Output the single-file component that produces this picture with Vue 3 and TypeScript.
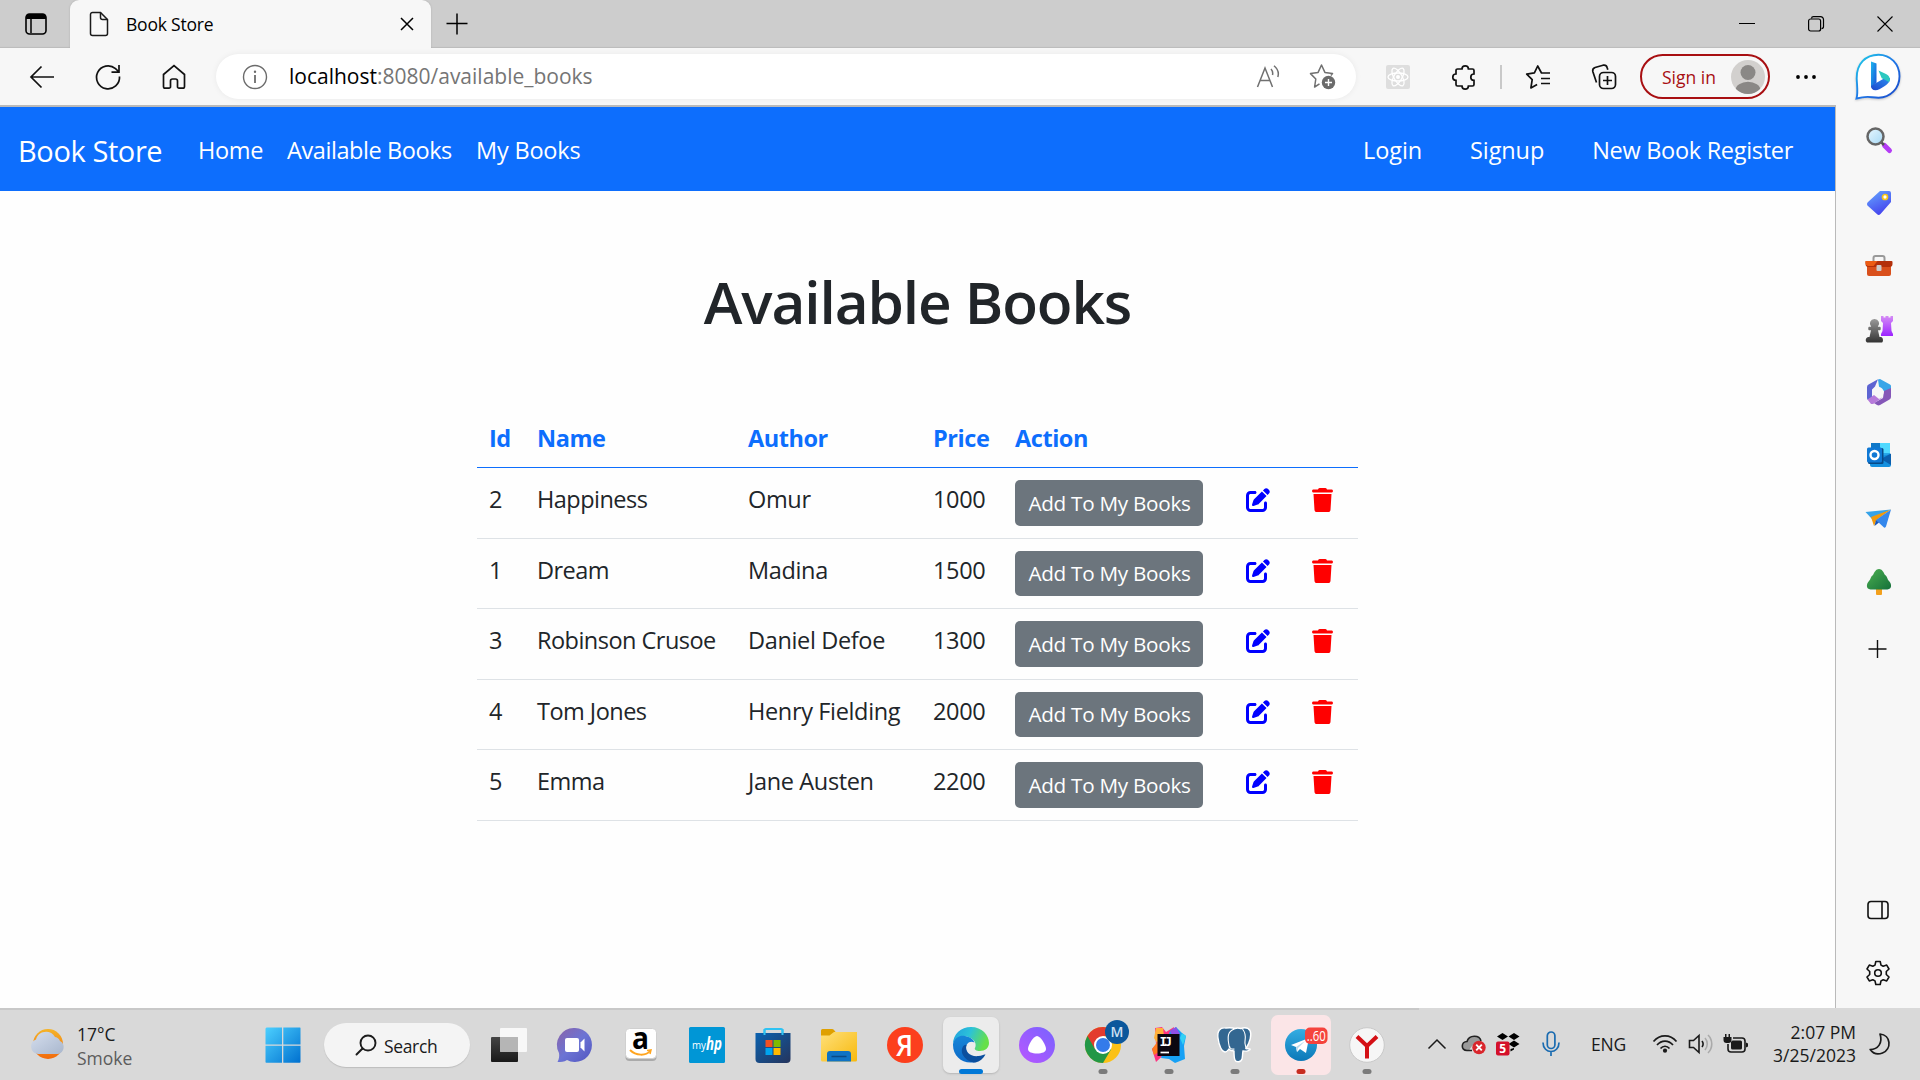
<script setup lang="ts">
interface Book {
  id: number
  name: string
  author: string
  price: number
}

const books: Book[] = [
  { id: 2, name: 'Happiness', author: 'Omur', price: 1000 },
  { id: 1, name: 'Dream', author: 'Madina', price: 1500 },
  { id: 3, name: 'Robinson Crusoe', author: 'Daniel Defoe', price: 1300 },
  { id: 4, name: 'Tom Jones', author: 'Henry Fielding', price: 2000 },
  { id: 5, name: 'Emma', author: 'Jane Austen', price: 2200 },
]
</script>

<template>
  <div class="screen">
    <header class="tabstrip">
      <div class="tab-actions">
        <svg width="22" height="22" viewBox="0 0 22 22"><rect x="1" y="1" width="20" height="20" rx="3.5" fill="none" stroke="#000" stroke-width="1.6" /><path d="M1 6V4a3 3 0 0 1 3-3h14a3 3 0 0 1 3 3v2z" fill="#000" /><path d="M6 6v14" stroke="#000" stroke-width="1.5" /></svg>
      </div>
      <div class="tab">
        <svg class="file" width="20" height="26" viewBox="0 0 20 26" fill="none" stroke="#1a1a1a" stroke-width="1.5"><path d="M3.500 1.500h8l7 7v14a2 2 0 0 1-2 2h-13a2 2 0 0 1-2-2v-19a2 2 0 0 1 2-2z" /><path d="M11.500 1.500v5a2 2 0 0 0 2 2h5" /></svg>
        <span class="tab-title">Book Store</span>
        <svg width="14" height="14" viewBox="0 0 14 14" stroke="#000" stroke-width="1.5"><path d="M1 1l12 12M13 1L1 13" /></svg>
      </div>
      <svg class="newtab" width="22" height="22" viewBox="0 0 22 22" stroke="#000" stroke-width="1.5"><path d="M11 .5v21M.5 10.500h21" /></svg>
      <div class="win">
        <span><svg width="16" height="16" viewBox="0 0 16 16" stroke="#000"><path d="M0 7.500h16" /></svg></span>
        <span><svg width="16" height="16" viewBox="0 0 16 16" fill="none" stroke="#000" stroke-width="1.2"><rect x=".6" y="3" width="12" height="12" rx="2" /><path d="M3.500 2.500a2 2 0 0 1 2-1.900h7a3 3 0 0 1 3 3v7a2 2 0 0 1-2 2" /></svg></span>
        <span><svg width="16" height="16" viewBox="0 0 16 16" stroke="#000" stroke-width="1.1"><path d="M.5.5l15 15M15.500.5l-15 15" /></svg></span>
      </div>
    </header>

    <div class="toolbar">
      <div class="tools">
        <span><svg width="26" height="24" viewBox="0 0 26 24" fill="none" stroke="#111" stroke-width="1.7"><path d="M25 12H2M12.500 1.500L2 12l10.500 10.500" /></svg></span>
        <span><svg width="26" height="26" viewBox="0 0 26 26" fill="none" stroke="#111" stroke-width="1.7"><path d="M24.500 12.500A11.500 11.500 0 1 1 20.500 4.600L23.500 7.500M24 1v7.200h-7.500" /></svg></span>
        <span><svg width="24" height="26" viewBox="0 0 24 26" fill="none" stroke="#111" stroke-width="1.7"><path d="M1.500 10.500L12 1.500l10.500 9v12a1.700 1.700 0 0 1-1.700 1.700H17a1.500 1.500 0 0 1-1.500-1.500V17a2 2 0 0 0-2-2h-3a2 2 0 0 0-2 2v5.700A1.500 1.500 0 0 1 7 24.200H3.200a1.700 1.700 0 0 1-1.700-1.700z" /></svg></span>
      </div>
      <div class="address">
        <svg width="26" height="26" viewBox="0 0 26 26" fill="none" stroke="#6b6b6b" stroke-width="1.4"><circle cx="13" cy="13" r="11.500" /><path d="M13 11v8" stroke-width="1.800" /><circle cx="13" cy="7.800" r="1.200" fill="#6b6b6b" stroke="none" /></svg>
        <span class="url"><b>localhost</b>:8080/available_books</span>
        <svg class="read" width="24" height="24" viewBox="0 0 24 24" fill="none" stroke="#707070" stroke-width="1.5"><path d="M1.500 22L9 3l7.500 19M4.300 15.500h9.500M15 4c1.500 1.700 2 4 1.500 6M18 .8c3.800 3.200 5 7.500 3.800 11.200" /></svg>
        <svg class="star" width="28" height="28" viewBox="0 0 28 28"><path d="M10.500 20.800L5.600 24l1.200-8L1.500 10.600l7.600-1.200L12.500 2l3.400 7.400 7.600 1.200-1.600 1.800" fill="none" stroke="#707070" stroke-width="1.500" stroke-linejoin="round" /><circle cx="19.500" cy="19.500" r="6.700" fill="#6b6b6b" /><path d="M19.500 16v7M16 19.500h7" stroke="#fff" stroke-width="1.400" /></svg>
      </div>
      <div class="tools ext">
        <span><svg width="24" height="24" viewBox="0 0 24 24"><rect width="24" height="24" rx="2" fill="#dedede" /><g fill="none" stroke="#fff" stroke-width="1.300"><ellipse cx="12" cy="12" rx="10" ry="4" /><ellipse cx="12" cy="12" rx="10" ry="4" transform="rotate(60 12 12)" /><ellipse cx="12" cy="12" rx="10" ry="4" transform="rotate(120 12 12)" /></g><circle cx="12" cy="12" r="2" fill="#fff" /></svg></span>
        <span><svg width="24" height="26" viewBox="0 0 24 26" fill="none" stroke="#111" stroke-width="1.7"><path d="M4 9V6.500A1.500 1.500 0 0 1 5.500 5H10a3.200 3.200 0 0 1 6.400 0h4.100A1.500 1.500 0 0 1 22 6.500V10a3.200 3.200 0 0 0 0 6.400v4.100a1.500 1.500 0 0 1-1.500 1.500h-4.100a3.200 3.200 0 0 1-6.400 0H5.500A1.500 1.500 0 0 1 4 20.500v-4.100A3.200 3.200 0 0 1 4 10z" /></svg></span>
        <i class="sep"></i>
        <span><svg width="26" height="26" viewBox="0 0 26 26" fill="none" stroke="#111" stroke-width="1.7" stroke-linejoin="round"><path d="M25 9h-8.500L12.700 2l-3.300 6.900-7.700 1.200 5.500 5.500L5.900 24l6.200-3.600M16 14.500h9M16 19.500h9" /></svg></span>
        <span><svg width="26" height="26" viewBox="0 0 26 26" fill="none" stroke="#111" stroke-width="1.7"><rect x="8.500" y="8.500" width="16" height="16" rx="4" /><path d="M16.500 12v9M12 16.500h9M5.500 18.500L1.800 7.500a3.500 3.500 0 0 1 2.300-4L12 1.200a3.500 3.500 0 0 1 4.200 2.500l.6 2" /></svg></span>
      </div>
      <div class="signin">
        <span>Sign in</span>
        <svg width="34" height="34" viewBox="0 0 34 34"><clipPath id="av"><circle cx="17" cy="17" r="17" /></clipPath><g clip-path="url(#av)"><rect width="34" height="34" fill="#d2d0ce" /><circle cx="17" cy="12.500" r="7.500" fill="#8a8886" /><ellipse cx="17" cy="30.500" rx="12.500" ry="8.700" fill="#8a8886" /></g></svg>
      </div>
      <svg class="dots" width="22" height="6" viewBox="0 0 22 6"><circle cx="3" cy="3" r="1.900" /><circle cx="11" cy="3" r="1.900" /><circle cx="19" cy="3" r="1.900" /></svg>
      <svg class="bing" width="46" height="47" viewBox="0 0 46 47">
        <defs><linearGradient id="bg1" x1="0" y1="0" x2="1" y2="1"><stop offset="0" stop-color="#1fd0e8" /><stop offset=".5" stop-color="#1f78e8" /><stop offset="1" stop-color="#1b48c8" /></linearGradient><linearGradient id="bg2" x1="0" y1="0" x2="1" y2="1"><stop offset="0" stop-color="#1cb8ee" /><stop offset="1" stop-color="#1a50d8" /></linearGradient><linearGradient id="bg3" x1="0" y1="1" x2="1" y2="0"><stop offset="0" stop-color="#1b48cc" /><stop offset="1" stop-color="#2f8cf0" /></linearGradient></defs>
        <path d="M1.500 45.500c1.700-6 .5-12 .2-20C1.300 11 10.500 1.700 23.500 1.700c12 0 21 9.500 21 21.500s-9 21.500-21 21.500c-8 0-10-2.500-22 .8z" fill="#fff" stroke="url(#bg1)" stroke-width="1.900" class="bubble" />
        <path d="M16 8.500l5.500 2v19.500L16 34.500z" fill="url(#bg2)" /><path d="M16 33l12.500-7.300 6.500-.7c.3 4-3 6.700-6 8.500-3.500 2.200-6 3.700-8.500 3.700C17.500 37.200 16 35.500 16 33z" fill="url(#bg3)" /><path d="M23.500 17.500l7.500 3.500c3.500 1.800 5 5.200 3 8.300-1.600-1.600-4.300-2.500-7.300-4z" fill="#2cc8c0" />
      </svg>
    </div>

    <div class="main">
      <div class="page">
        <nav class="navbar">
          <a class="brand">Book Store</a>
          <a class="n1">Home</a>
          <a class="n2">Available Books</a>
          <a class="n3">My Books</a>
          <a class="n4">Login</a>
          <a class="n5">Signup</a>
          <a class="n6">New Book Register</a>
        </nav>
        <h1>Available Books</h1>
        <div class="table">
          <div class="row head">
            <span>Id</span><span>Name</span><span>Author</span><span>Price</span><span>Action</span>
          </div>
          <div v-for="b in books" :key="b.id" class="row">
            <span>{{ b.id }}</span>
            <span class="name">{{ b.name }}</span>
            <span>{{ b.author }}</span>
            <span>{{ b.price }}</span>
            <button class="add">Add To My Books</button>
            <svg class="edit" width="24" height="24" viewBox="0 0 512 512" fill="#00f"><path d="M471.600 21.700c-21.900-21.900-57.300-21.900-79.200 0L362.300 51.700l97.900 97.900 30.100-30.100c21.900-21.900 21.900-57.300 0-79.200L471.600 21.700zm-299.200 220c-6.100 6.100-10.800 13.600-13.500 21.900l-29.600 88.800c-2.900 8.600-.6 18.100 5.800 24.600s15.900 8.700 24.600 5.800l88.800-29.600c8.200-2.700 15.700-7.400 21.900-13.500L437.700 172.300 339.700 74.300 172.400 241.700zM96 64C43 64 0 107 0 160V416c0 53 43 96 96 96H352c53 0 96-43 96-96V320c0-17.700-14.300-32-32-32s-32 14.300-32 32v96c0 17.700-14.300 32-32 32H96c-17.700 0-32-14.300-32-32V160c0-17.700 14.300-32 32-32h96c17.700 0 32-14.300 32-32s-14.300-32-32-32H96z" /></svg>
            <svg class="trash" width="21" height="24" viewBox="0 0 448 512" fill="#f00"><path d="M135.200 17.700L128 32H32C14.300 32 0 46.300 0 64S14.300 96 32 96H416c17.700 0 32-14.300 32-32s-14.300-32-32-32H320l-7.200-14.300C307.400 6.800 296.300 0 284.200 0H163.800c-12.100 0-23.200 6.800-28.600 17.700zM416 128H32L53.200 467c1.600 25.300 22.600 45 47.900 45H346.900c25.300 0 46.300-19.700 47.900-45L416 128z" /></svg>
          </div>
        </div>
      </div>

      <aside class="sidebar">
        <svg viewBox="0 0 28 28"><defs><linearGradient id="lens" x1="0" y1="0" x2="1" y2="1"><stop offset="0" stop-color="#e8f7ff" /><stop offset="1" stop-color="#a5d8f5" /></linearGradient></defs><path d="M19.500 19.500l5 5" stroke="#b43cf5" stroke-width="5" stroke-linecap="round" /><path d="M16 16l3 3" stroke="#555" stroke-width="2.500" /><circle cx="10.500" cy="10.500" r="8" fill="url(#lens)" stroke="#666" stroke-width="2.500" /></svg>
        <svg viewBox="0 0 28 28"><defs><linearGradient id="tg" x1="0" y1="0" x2=".5" y2="1"><stop offset="0" stop-color="#66aaff" /><stop offset="1" stop-color="#4646ee" /></linearGradient></defs><path d="M15 2h9a2 2 0 0 1 2 2v9L15.500 25a2.500 2.500 0 0 1-3.600 0L3 17a2.500 2.500 0 0 1 0-4z" fill="url(#tg)" /><circle cx="20" cy="8" r="2.500" fill="#fff" stroke="#f5c518" stroke-width="1.700" /></svg>
        <svg viewBox="0 0 28 28"><path d="M8.500 10V6a2 2 0 0 1 2-2h7a2 2 0 0 1 2 2v4" fill="none" stroke="#999" stroke-width="2" /><rect x="2" y="12" width="24" height="12" rx="2" fill="#d9501c" /><path d="M1.500 9h25a1 1 0 0 1 1 1v2a3 3 0 0 1-3 3h-21a3 3 0 0 1-3-3v-2a1 1 0 0 1 1-1z" fill="#b3300b" /><path d="M.5 9h12l-4 5H3a3 3 0 0 1-2.500-3z" fill="#ec5c14" /><rect x="11.500" y="13" width="5" height="6" rx="1" fill="#ccc" /></svg>
        <svg viewBox="0 0 28 28"><defs><linearGradient id="pw" x1="0" y1="0" x2="0" y2="1"><stop offset="0" stop-color="#999" /><stop offset="1" stop-color="#333" /></linearGradient><linearGradient id="rk" x1="0" y1="0" x2="0" y2="1"><stop offset="0" stop-color="#d58cf5" /><stop offset="1" stop-color="#9c24ff" /></linearGradient></defs><path d="M16 1h2.500v1.500h2V1h3v1.500h2V1H28v5l-2 2 .5 8 1.500 3v2H16v-2l1.500-3 .5-8-2-2z" fill="url(#rk)" /><path d="M9.500 4a4.500 4.500 0 0 1 3.300 7.700H15c1 0 1 3.500 0 3.500h-2l1.500 6.800h1.500c3 1 2 5.500 1 5.500H2C0 26 .500 23 3 22h1.500L6 15.200H4c-1 0-1-3.500 0-3.500h2.200A4.500 4.500 0 0 1 9.500 4z" fill="url(#pw)" /></svg>
        <svg viewBox="0 0 28 28"><path d="M13 1.500l2-.5 10 5.500a2 2 0 0 1 1 2V17l-8-4.500-4-4z" fill="#38a5e8" /><path d="M26 10v9a3 3 0 0 1-1.500 2.500L15 27a3 3 0 0 1-3 0L9 25l9-5 1-7z" fill="#8557b8" /><path d="M13 1.200L4 6.300A3 3 0 0 0 2 9v11a2.500 2.500 0 0 0 1 2l4-2.500v-8l3-3z" fill="#5d64d2" /><path d="M2.500 21.500L9 17l5 4 4-2-9 6.500a4 4 0 0 1-3 .5z" fill="#b67ada" /><circle cx="14" cy="14" r="4.700" fill="#f7f7f7" /></svg>
        <svg viewBox="0 0 28 28"><rect x="6" y="2" width="19" height="17" rx="1" fill="#28a8ea" /><path d="M15 2h10v10H15z" fill="#50d9ff" /><path d="M6 2h9v5H6z" fill="#0f78c8" /><path d="M5 17l21-4v11a2 2 0 0 1-2 2H7a2 2 0 0 1-2-2z" fill="#1490df" /><path d="M16 18l10-5.500V24z" fill="#0a5fae" /><rect x="3" y="7" width="15.500" height="16" rx="1.500" fill="#074a87" /><rect x="2" y="6.500" width="15" height="15" rx="1.500" fill="#0f78d4" /><circle cx="9.500" cy="14" r="4" fill="none" stroke="#fff" stroke-width="2.400" /></svg>
        <svg viewBox="0 0 28 28"><path d="M.5 7L26 4.500 7 14z" fill="#36a3e8" /><path d="M26 4.500L6 12l3 9 2.500-6z" fill="#f29a0c" /><path d="M26 4.500L11 15l8 7.500c1 .5 1.500 0 2-1z" fill="#3487ec" /><path d="M11 15l3 2.500-4.500 3.500z" fill="#1455bf" /></svg>
        <svg viewBox="0 0 28 28"><defs><linearGradient id="tr" x1="0" y1="0" x2="1" y2="1"><stop offset="0" stop-color="#4caf50" /><stop offset="1" stop-color="#14703a" /></linearGradient></defs><rect x="11" y="20" width="6" height="7" rx="1" fill="#f3a01c" /><path d="M14 1c3 0 4.500 3 6 6 2.500 1.500 2 4 4 6 3 3 3 8-1.500 8.500h-17C1 21 1 16 4 13c2-2 1.500-4.500 4-6 1.500-3 3-6 6-6z" fill="url(#tr)" /></svg>
        <svg class="plus" viewBox="0 0 28 28" stroke="#111" stroke-width="1.400"><path d="M12.500 5v18M3.500 14h18" /></svg>
        <i class="rule"></i>
        <svg class="panel" viewBox="0 0 28 28" fill="none" stroke="#111" stroke-width="1.600"><rect x="3" y="5.500" width="20" height="17" rx="3" /><path d="M17 5.500v17" /></svg>
        <svg class="gear" viewBox="0 0 28 28" fill="none" stroke="#111" stroke-width="1.600" stroke-linejoin="round"><circle cx="13" cy="14" r="3.300" /><path d="M10.800 2.500h4.400l.8 3.600 2.200 1.200 3.500-1.200 2.300 3.900-2.700 2.500v3l2.700 2.500-2.300 3.900-3.500-1.200-2.200 1.200-.8 3.600h-4.400L10 21.900l-2.200-1.200-3.500 1.200L2 18l2.700-2.500v-3L2 10l2.300-3.900 3.500 1.200L10 6.100z" /></svg>
      </aside>
    </div>

    <footer class="taskbar">
      <div class="weather">
        <svg width="36" height="32" viewBox="0 0 36 32"><defs><linearGradient id="sun" x1="0" y1="0" x2="0" y2="1"><stop offset="0" stop-color="#f4b429" /><stop offset="1" stop-color="#f26a0c" /></linearGradient><linearGradient id="cl" x1="0" y1="0" x2="1" y2="1"><stop offset="0" stop-color="#d5deee" /><stop offset="1" stop-color="#a9b7cd" /></linearGradient></defs><circle cx="18" cy="16" r="15" fill="url(#sun)" /><path d="M8 26a7.500 7.500 0 0 1-2-14.500c2-9 15-10.500 19-2.500 3 .5 4 2 5 4a7 7 0 0 1-2 13z" fill="url(#cl)" /></svg>
        <div><p class="temp">17°C</p><p class="smoke">Smoke</p></div>
      </div>
      <svg class="start" width="36" height="36" viewBox="0 0 36 36"><defs><linearGradient id="ws" x1="0" y1="0" x2="1" y2="1"><stop offset="0" stop-color="#4cd0ff" /><stop offset="1" stop-color="#0070cf" /></linearGradient></defs><path d="M1.500.5H17v17H.5v-16zM18.300.5H35a.8.8 0 0 1 .5.8v16.200H18.300zM.5 18.800H17v17H1.300a.8.800 0 0 1-.8-.8zM18.300 18.800h17.200V35a.8.800 0 0 1-.8.8H18.300z" fill="url(#ws)" /></svg>
      <div class="search">
        <svg width="22" height="22" viewBox="0 0 22 22" fill="none" stroke="#1c1c1c" stroke-width="1.900"><circle cx="13" cy="9" r="7.500" /><path d="M7.500 14.500L1.500 20.500" stroke-linecap="round" /></svg>
        <span>Search</span>
      </div>
      <div class="apps">
        <span class="app"><svg viewBox="0 0 36 36"><defs><linearGradient id="tv" x1="0" y1="0" x2="0" y2="1"><stop offset="0" stop-color="#444" /><stop offset="1" stop-color="#191919" /></linearGradient></defs><rect y="10" width="27" height="25" rx="1" fill="url(#tv)" /><rect x="9" y="1" width="27" height="24" rx="1" fill="#fff" opacity=".8" /><path d="M9 10h18v15H9z" fill="#aaa" opacity=".75" /></svg></span>
        <span class="app"><svg viewBox="0 0 36 36"><defs><linearGradient id="ch" x1="0" y1="0" x2="1" y2="1"><stop offset="0" stop-color="#8b63a8" /><stop offset=".5" stop-color="#6c74d4" /><stop offset="1" stop-color="#5155c0" /></linearGradient></defs><path d="M18 1a17 17 0 1 1-8 32c-3 2-6 2-9.500 2 1.700-3 2-6 1.500-9A17 17 0 0 1 18 1z" fill="url(#ch)" /><rect x="8" y="11" width="14" height="14" rx="2" fill="#fff" /><path d="M23.500 15.500l4-4v13l-4-4z" fill="#fff" /></svg></span>
        <span class="app"><svg viewBox="0 0 36 36"><rect x="2.500" y="3" width="31" height="31" rx="4" fill="#aaa" /><rect x="2.500" y="1.500" width="31" height="30" rx="4" fill="#fff" stroke="#d0d0d0" /><text x="17.500" y="22" text-anchor="middle" font-size="31" font-weight="700" textLength="17" lengthAdjust="spacingAndGlyphs">a</text><path d="M7 23c6 6 16 6 20 1" fill="none" stroke="#ffa51f" stroke-width="2" /><path d="M24 23.500l4-.5-1 4" fill="none" stroke="#ffa51f" stroke-width="1.500" /></svg></span>
        <span class="app"><svg viewBox="0 0 36 36"><rect width="36" height="36" rx="1.500" fill="#0096d6" /><text x="3" y="21.500" fill="#fff" font-size="11" textLength="14" lengthAdjust="spacingAndGlyphs">my</text><text x="17" y="22.500" fill="#fff" font-size="17" font-weight="700" font-style="italic" textLength="16" lengthAdjust="spacingAndGlyphs">hp</text></svg></span>
        <span class="app"><svg viewBox="0 0 36 36"><defs><linearGradient id="st" x1="0" y1="0" x2="1" y2="1"><stop offset="0" stop-color="#0b62b0" /><stop offset="1" stop-color="#25345c" /></linearGradient></defs><path d="M9.500 8V3.500a1.500 1.500 0 0 1 1.500-1.500h15a1.500 1.500 0 0 1 1.500 1.500V8" fill="none" stroke="#2fc3f3" stroke-width="2" /><path d="M.5 6h35v26a4 4 0 0 1-4 4h-27a4 4 0 0 1-4-4z" fill="url(#st)" /><path d="M9.500 2v6M27.500 2v6" stroke="#2fc3f3" stroke-width="2" /><path d="M10.500 13h7v7h-7z" fill="#f25022" /><path d="M18.500 13h7v7h-7z" fill="#7fba00" /><path d="M10.500 21h7v7h-7z" fill="#00a4ef" /><path d="M18.500 21h7v7h-7z" fill="#ffb900" /></svg></span>
        <span class="app"><svg viewBox="0 0 36 36"><defs><linearGradient id="fo" x1="0" y1="0" x2="1" y2="1"><stop offset="0" stop-color="#ffe07a" /><stop offset="1" stop-color="#f7b90d" /></linearGradient></defs><path d="M0 3.500A1.500 1.500 0 0 1 1.500 2H11a3 3 0 0 1 2 1l2 2.500-5 6H0z" fill="#dfa000" /><path d="M0 8.500h8.500L13 5h23v28a1.500 1.500 0 0 1-1.500 1.500h-33A1.500 1.500 0 0 1 0 33z" fill="url(#fo)" /><path d="M6 34.500V27a3 3 0 0 1 3-3h18a3 3 0 0 1 3 3v7.500z" fill="#0f73c4" /><path d="M10.500 29.500h15" stroke="#0a4a86" stroke-width="1.500" /></svg></span>
        <span class="app"><svg viewBox="0 0 36 36"><circle cx="18" cy="18" r="18" fill="#fc3f1d" /><text x="17.500" y="28.500" text-anchor="middle" font-size="29.500" fill="#fff" font-weight="600" textLength="17" lengthAdjust="spacingAndGlyphs">Я</text></svg></span>
        <span class="app on"><svg viewBox="0 0 36 36"><defs><linearGradient id="e1" x1="0" y1="0" x2="1" y2=".3"><stop offset="0" stop-color="#1f9fe0" /><stop offset=".5" stop-color="#2cc2d8" /><stop offset="1" stop-color="#66e04a" /></linearGradient><linearGradient id="e2" x1="0" y1="0" x2="0" y2="1"><stop offset="0" stop-color="#1686d8" /><stop offset="1" stop-color="#0d6ac8" /></linearGradient></defs><path d="M0 17C0 7 8 0 18 0c11 0 18 8 18 16 0 5-4 8-9 8-4 0-6-1.500-5-3 2-4-.500-9-6.500-11C9 8.500 2 11 0 17z" fill="url(#e1)" /><path d="M0 17C1.500 10.500 7 8 12 9c5 .8 8.500 3.500 9.500 6.500-5-2.500-9 1.500-8.500 6.500.5 6 6 10.500 10.500 12.700C11 38.500 0 30 0 18z" fill="url(#e2)" /><path d="M13.500 18c-2 7 4 12 12 11 3.500-.5 5.500-2 7-1.500-2 4-6 7-10 8-9 0-16-9-13-15 1-2 2.500-3 4-2.500z" fill="#0b4f9e" /></svg></span>
        <span class="app"><svg viewBox="0 0 36 36"><defs><linearGradient id="al" x1="0" y1="1" x2="1" y2="0"><stop offset="0" stop-color="#b956ff" /><stop offset="1" stop-color="#7763ff" /></linearGradient></defs><circle cx="18" cy="18" r="18" fill="url(#al)" /><path d="M18 9c3.500 0 9 9 9 13 0 3-4 4.500-9 4.500S9 25 9 22c0-4 5.500-13 9-13z" fill="#fff" /></svg></span>
        <span class="app run"><svg viewBox="0 0 36 36"><circle cx="18" cy="18" r="18" fill="#fbc116" /><path d="M18 18L2.400 9A18 18 0 0 1 33.600 9H18z" fill="#e33b2e" /><path d="M2.400 9A18 18 0 0 0 18 36l8-13.500-8-4.500z" fill="#229746" /><path d="M2.400 9L10 22l8-4V9z" fill="#e33b2e" /><circle cx="18" cy="18" r="9" fill="#fff" /><circle cx="18" cy="18" r="7" fill="#347bea" /><circle cx="32" cy="5" r="12" fill="#0b579c" /><text x="32" y="10" text-anchor="middle" font-size="14" font-weight="600" fill="#cbe0f3">M</text></svg></span>
        <span class="app run"><svg viewBox="0 0 36 36"><path d="M4 1l7-1 4 5 8-5-2 20L5 35 1 22l4-4z" fill="#ff3380" /><path d="M5 1l7 0 1 9-7 6-3-5z" fill="#ffb13b" /><path d="M1 22l6-8 4 9-8 5z" fill="#ff7a20" /><path d="M19 4l6-4 6 6 4 3-2 10 1 13-10 4-6-4-8-1z" fill="#17a1f5" /><path d="M19 4l6-4 4 7-8 2z" fill="#8f50e8" /><path d="M31 6l4 3-3 9-3-7z" fill="#34d0f4" /><rect x="6.500" y="7" width="22" height="22" fill="#0b0710" /><text x="8.500" y="18.500" class="mono" font-size="12.500" font-weight="700" fill="#fff" textLength="12.500">IJ</text><path d="M9.500 25.500h8.500" stroke="#fff" stroke-width="1.700" /></svg></span>
        <span class="app run"><svg viewBox="0 0 36 36"><path d="M9 1C3 0 0 4 1 11c1 8 4 14 7 14 2 0 3-2 4-3 2 3 4 1 5 2 0 4 0 7 1 9 1 2.500 6 2.500 7-1 .6-2 .4-5 1-8 4 .6 8-1 7-2-2-.6-3 0-4-.5 4-6 6-14 4-18-2-3-6-3-9-2-2-.6-4-1-6 0-3-1-6-1-9-.5z" fill="#336791" stroke="#fff" stroke-width="1.400" /><path d="M12.500 21c-1-5-2-9-1-13 .6-3 3-5 6-6M25.500 2c4 5 3 9 2.500 12-.6 3 .8 5 1 7M17.500 22c-3 .5-5-.5-5-3" fill="none" stroke="#fff" stroke-width="1.100" /></svg></span>
        <span class="app run alert"><svg viewBox="0 0 36 36"><defs><linearGradient id="te" x1="0" y1="0" x2="0" y2="1"><stop offset="0" stop-color="#35ade2" /><stop offset="1" stop-color="#0b78b8" /></linearGradient></defs><circle cx="18" cy="18" r="16" fill="url(#te)" /><path d="M8 18l18-7-3 15-6-4-3 3-1-5z" fill="#fff" /><path d="M13 20l9-6-7 7-1 4z" fill="#b5d8ec" /><rect x="22" y=".5" width="22.500" height="16.500" rx="5" fill="#f5433d" /><text x="33.300" y="14" text-anchor="middle" font-size="14" fill="#fff" textLength="19" lengthAdjust="spacingAndGlyphs">..60</text></svg></span>
        <span class="app run"><svg viewBox="0 0 36 36"><circle cx="18" cy="18" r="17.300" fill="#f6f6f6" stroke="#c9c9c9" /><path d="M8 9.500l10 9.500 10-9.500M18 18v13.500" fill="none" stroke="#d40f15" stroke-width="4" /></svg></span>
      </div>
      <div class="tray">
        <svg class="chev" width="18" height="10" viewBox="0 0 18 10" fill="none" stroke="#1a1a1a" stroke-width="1.500"><path d="M.5 9.500L9 1l8.500 8.500" /></svg>
        <svg class="cloud" width="26" height="22" viewBox="0 0 26 22"><path d="M6 17.500C-.5 17.500 0 8.500 6 8.500 8 1.500 18.500 1.500 20 8c-5 0-8 3-12 9.500z" fill="#9a9a9a" /><path d="M11 17.500H6C-.5 17.500 0 8.500 6 8.500 8 1.500 18.500 1.500 20 8" fill="none" stroke="#222" stroke-width="1.600" /><circle cx="18" cy="14.500" r="6.700" fill="#d9262c" /><path d="M15.200 11.700l5.600 5.600M20.800 11.700l-5.600 5.600" stroke="#fff" stroke-width="1.900" /></svg>
        <svg class="drop" width="26" height="24" viewBox="0 0 26 24"><path d="M1 4.500l5.500-3.500 5.500 3.500L6.500 8zM12.500 4.500L18 1l5.500 3.500L18 8zM12.500 12L18 8.500l5.500 3.500-5.500 3.500zM14.500 17l3.500-1v1.500l-3.500 2z" /><rect y="9.500" width="13.500" height="14" rx="2" fill="#d4102a" /><text x="6.700" y="21" text-anchor="middle" fill="#fff" font-size="12" font-weight="700">5</text></svg>
        <svg class="mic" width="18" height="26" viewBox="0 0 18 26" fill="none" stroke="#1a6bb0" stroke-width="1.700"><rect x="5.300" y="1" width="7.600" height="16.500" rx="3.800" /><path d="M1 11.500c0 12 16 12 16 0M9 20.500V25" /></svg>
        <span class="eng">ENG</span>
        <svg class="wifi" width="26" height="20" viewBox="0 0 26 20" fill="none" stroke="#1a1a1a" stroke-width="1.700"><path d="M1.500 7.500c6.500-7.500 16.500-7.500 23 0M5 11c4.500-5.300 11.500-5.300 16 0M8.500 14.500c2.500-3 6.500-3 9 0" /><circle cx="13" cy="16.700" r="2.100" fill="#1a1a1a" stroke="none" /></svg>
        <svg class="vol" width="26" height="22" viewBox="0 0 26 22" fill="none" stroke="#1a1a1a" stroke-width="1.600"><path d="M1.500 7.500h4L11 2.500v17L5.500 14.500h-4zM14 8c1.500 2 1.500 4 0 6" /><path d="M17 5c3 3.500 3 8.500 0 12M20 2c5 5 5 13 0 18" stroke="#aaa" /></svg>
        <svg class="batt" width="26" height="22" viewBox="0 0 26 22"><path d="M10 5h9a3 3 0 0 1 3 3v8a3 3 0 0 1-3 3H8a3 3 0 0 1-3-3v-5" fill="none" stroke="#1a1a1a" stroke-width="1.600" /><path d="M9.500 7.500h8A1.500 1.500 0 0 1 19 9v6a1.500 1.500 0 0 1-1.500 1.500h-8A1.500 1.500 0 0 1 8 15V9zM23 9.500l2 1v3l-2 1zM.5 4h8v3a3 3 0 0 1-3 3h-2a3 3 0 0 1-3-3zM2 1h1.500v3H2zM5.500 1H7v3H5.500z" fill="#1a1a1a" /></svg>
        <div class="clock"><p class="time">2:07 PM</p><p class="date">3/25/2023</p></div>
        <svg class="moon" width="22" height="22" viewBox="0 0 22 22" fill="none" stroke="#1a1a1a" stroke-width="1.700" stroke-linejoin="round"><path d="M11 1c11 1 12 15 2.500 19-5 2-9.500.5-12.300-3.500C9 16.500 14 10 11 1z" /></svg>
      </div>
    </footer>
  </div>
</template>

<style>
body { background: #fff; overflow: hidden; }
</style>

<style scoped>
.screen { width: 1920px; height: 1080px; overflow: hidden; display: flex; flex-direction: column; background: #f7f7f7; font-family: "Open Sans", "Noto Sans", sans-serif; color: #000; }
svg { display: block; flex: none; overflow: visible; }
p { margin: 0; }
span, a, p, h1 { white-space: nowrap; }

.tabstrip { height: 48px; flex: none; display: flex; background: #cdcdcd; box-shadow: inset 0 -2px 1px -1px #bcbcbc; }
.tab-actions { width: 70px; box-sizing: border-box; padding: 13px 0 0 25px; }
.tab { width: 361px; box-sizing: border-box; display: flex; align-items: center; background: #f7f7f7; border-radius: 9px 9px 0 0; padding: 0 17px 0 19px; box-shadow: 0 0 2px #aaa; clip-path: inset(0 -3px 0 -3px); }
.tab-title { flex: 1; margin-left: 17px; font-size: 17.500px; letter-spacing: -0.2px; line-height: 48px; }
.newtab { margin: 13px 0 0 15px; }
.win { margin-left: auto; display: flex; margin-right: 1px; }
.win span { width: 69px; height: 47px; display: flex; align-items: center; justify-content: center; }

.toolbar { height: 57px; flex: none; display: flex; align-items: center; padding-left: 9px; }
.tools { display: flex; align-items: center; }
.tools span { width: 66px; display: flex; justify-content: center; }
.address { width: 1140px; height: 45px; margin-left: 9px; box-sizing: border-box; display: flex; align-items: center; border-radius: 23px; background: #fff; padding: 0 19px 0 26px; box-shadow: 0 0 6px rgba(0, 0, 0, 0.06); }
.url { flex: 1; margin: -2px 0 0 21px; font-size: 21px; color: #757575; letter-spacing: 0; }
.url b { font-weight: 400; color: #000; }
.read { margin-right: 29px; }
.ext { margin-left: 9px; }
.sep { width: 2px; height: 24px; background: #c9c9c9; margin: 0 3px; }
.signin { width: 130px; height: 45px; margin-left: 3px; box-sizing: border-box; border: 2px solid #a80f12; border-radius: 23px; display: flex; align-items: center; justify-content: space-between; padding: 0 3px 0 20px; color: #a80f12; font-size: 17.500px; }
.dots { margin-left: 25px; }
.bing { margin-left: 38px; filter: drop-shadow(0 1px 1px rgba(0, 0, 0, 0.2)); }

.main { height: 903px; flex: none; display: flex; }
.page { width: 1835px; background: #fefefe; border-top: 2px solid #bababa; border-right: 1px solid #bababa; height: 901px; display: flex; flex-direction: column; }
.navbar { height: 84px; flex: none; background: #0d6efd; color: #fff; display: flex; align-items: center; padding: 2px 42px 0 18px; box-sizing: border-box; font-size: 23.500px; letter-spacing: -0.3px; }
.brand { font-size: 29px; width: 180px; letter-spacing: -0.4px; }
.n1 { width: 89px; }
.n2 { width: 189px; letter-spacing: -0.42px; }
.n3 { width: 150px; letter-spacing: -0.2px; }
.n4 { margin-left: auto; margin-right: 48px; letter-spacing: -0.1px; }
.n5 { margin-right: 48px; letter-spacing: -0.1px; }
h1 { margin: 68px 0 0; text-align: center; font-size: 58.500px; line-height: 84px; letter-spacing: -1.1px; font-weight: 600; color: #212529; }
.table { width: 881px; margin: 64px 0 0 477px; font-size: 23.500px; letter-spacing: -0.35px; color: #212529; }
.row { height: 70.500px; box-sizing: border-box; border-bottom: 1px solid #dee2e6; display: grid; grid-template-columns: 48px 211px 185px 82px 230px 67px 46px; padding-left: 12px; padding-top: 12px; align-items: start; }
.row span { line-height: 38px; }
.row .name { letter-spacing: -0.52px; }
.head { height: 61.400px; border-color: #0d6efd; color: #0d6efd; font-weight: 700; letter-spacing: -0.45px; }
.add { width: 188px; height: 45.500px; border: 0; border-radius: 5px; background: #6c757d; color: #fff; font-family: inherit; font-size: 20.700px; letter-spacing: -0.28px; line-height: 43px; padding: 0 0 0 1px; white-space: nowrap; }
.edit, .trash { margin-top: 8px; }
.edit { margin-left: 0.500px; }

.sidebar { width: 84px; display: flex; flex-direction: column; align-items: center; padding-top: 20.500px; box-sizing: border-box; }
.sidebar svg { width: 28px; height: 28px; margin-bottom: 35.200px; margin-left: 2px; }
.sidebar .plus { margin-top: 3.500px; margin-bottom: 210px; }
.rule { width: 42px; height: 1px; background: #b5b5b5; }
.sidebar .panel { margin-top: 23px; margin-bottom: 35px; }

.taskbar { height: 72px; flex: none; display: flex; align-items: center; background: linear-gradient(#c8c8c8, #c8c8c8) 0 0 / 1419px 2px no-repeat #d9d9d9; color: #1a1a1a; }
.weather { width: 236px; display: flex; align-items: center; padding-left: 30px; font-size: 17.500px; line-height: 24px; }
.weather div { margin: 3px 0 0 11px; }
.smoke { color: #5c5c5c; }
.start { margin: 2px 0 0 -1px; }
.search { width: 146px; height: 44px; margin: 2px 0 0 23px; box-sizing: border-box; border-radius: 22px; background: #f4f4f4; box-shadow: 0 1px 1px #bdbdbd; display: flex; align-items: center; padding-left: 31px; font-size: 17.500px; }
.search span { margin: 1px 0 0 7px; letter-spacing: -0.35px; }
.apps { display: flex; margin-left: 6px; height: 72px; }
.app { width: 56px; height: 56px; margin: 9px 5px 7px; border-radius: 7px; position: relative; display: flex; align-items: center; justify-content: center; }
.app svg { width: 36px; height: 36px; }
.app.on { background: #ececec; box-shadow: 0 1px 2px #b5b5b5; }
.app.on::after, .app.run::after { content: ""; position: absolute; bottom: -1px; left: 50%; width: 24px; height: 5px; border-radius: 3px; transform: translateX(-50%); background: #0078d7; }
.app.run::after { width: 9px; background: #7b7b7b; }
.app.alert { width: 60px; height: 60px; margin: 7px 3px 5px; background: #fbe5e7; }
.app.alert::after { bottom: 1px; background: #c72c20; }
.mono { font-family: "DejaVu Sans Mono", monospace; }
.tray { display: flex; align-items: center; height: 72px; margin-left: 28px; font-size: 17.500px; }
.cloud { margin-left: 15px; }
.drop { margin-left: 9px; }
.mic { margin-left: 20px; }
.eng { width: 61px; margin-left: 31px; letter-spacing: -0.2px; }
.vol { margin-left: 10px; }
.batt { margin-left: 9px; }
.clock { width: 107px; text-align: right; line-height: 23px; }
.moon { margin-left: 13px; }
</style>
